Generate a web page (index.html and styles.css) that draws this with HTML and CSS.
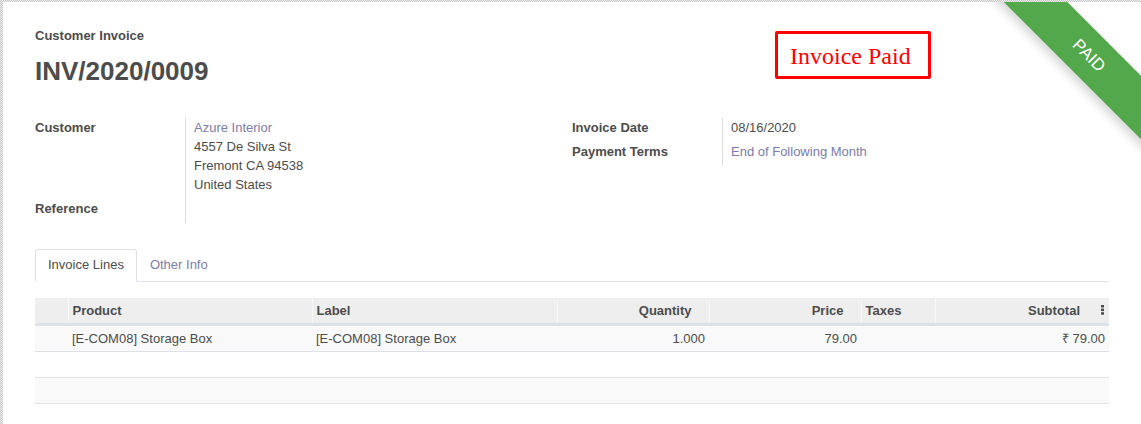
FILE: index.html
```html
<!DOCTYPE html>
<html lang="en">
<head>
<meta charset="utf-8">
<title>INV/2020/0009</title>
<link rel="stylesheet" href="styles.css">
</head>
<body>
<div class="sheet">
  <div class="ribbon-wrap"><span class="ribbon">PAID</span></div>

  <div class="header">
    <div class="title-block">
      <div class="subtitle">Customer Invoice</div>
      <h1 class="title">INV/2020/0009</h1>
    </div>
    <div class="stamp-col">
      <div class="stamp">Invoice Paid</div>
    </div>
  </div>

  <div class="groups">
    <div class="group">
      <div class="row">
        <div class="label">Customer</div>
        <div class="value">
          <a class="link">Azure Interior</a>
          <div>4557 De Silva St</div>
          <div>Fremont CA 94538</div>
          <div>United States</div>
        </div>
      </div>
      <div class="row">
        <div class="label">Reference</div>
        <div class="value"></div>
      </div>
    </div>
    <div class="group">
      <div class="row">
        <div class="label">Invoice Date</div>
        <div class="value">08/16/2020</div>
      </div>
      <div class="row">
        <div class="label">Payment Terms</div>
        <div class="value"><a class="link">End of Following Month</a></div>
      </div>
    </div>
  </div>

  <ul class="tabs">
    <li class="tab active">Invoice Lines</li>
    <li class="tab">Other Info</li>
  </ul>

  <table class="lines">
    <colgroup>
      <col class="c-handle">
      <col class="c-product">
      <col class="c-label">
      <col class="c-qty">
      <col class="c-price">
      <col class="c-taxes">
      <col class="c-subtotal">
    </colgroup>
    <thead>
      <tr>
        <th class="handle"></th>
        <th>Product</th>
        <th>Label</th>
        <th class="num">Quantity</th>
        <th class="num">Price</th>
        <th>Taxes</th>
        <th class="last">
          <div class="last-inner">
            <span>Subtotal</span>
            <svg class="toggler" width="3" height="10" viewBox="0 0 3 10"><rect x="0" y="0" width="3" height="2.5"/><rect x="0" y="3.6" width="3" height="2.5"/><rect x="0" y="7.2" width="3" height="2.5"/></svg>
          </div>
        </th>
      </tr>
    </thead>
    <tbody>
      <tr class="stripe">
        <td></td>
        <td>[E-COM08] Storage Box</td>
        <td>[E-COM08] Storage Box</td>
        <td class="num">1.000</td>
        <td class="num">79.00</td>
        <td></td>
        <td class="num">₹ 79.00</td>
      </tr>
      <tr>
        <td></td><td></td><td></td><td></td><td></td><td></td><td></td>
      </tr>
      <tr class="stripe">
        <td></td><td></td><td></td><td></td><td></td><td></td><td></td>
      </tr>
    </tbody>
  </table>
</div>
</body>
</html>
```

FILE: styles.css
```css
html, body {
  margin: 0;
  padding: 0;
}

body {
  background: repeating-conic-gradient(#c8c8c8 0 25%, #ececec 0 50%) 0 0 / 2px 2px;
  font-family: "Liberation Sans", Arial, sans-serif;
  font-size: 13px;
  color: #4c4c4c;
  height: 424px;
  overflow: hidden;
}

.sheet {
  position: relative;
  margin: 2px 0 0 3px;
  height: 422px;
  background: #fff;
  overflow: hidden;
  padding: 0 32px;
  box-sizing: border-box;
}

/* Ribbon */
.ribbon-wrap {
  position: absolute;
  top: 0;
  right: 0;
  width: 150px;
  height: 150px;
  overflow: hidden;
}

.ribbon {
  position: absolute;
  left: -14px;
  top: 31px;
  width: 224px;
  height: 45px;
  line-height: 45px;
  text-align: center;
  background: #52a84b;
  color: #fff;
  font-size: 17px;
  transform: rotate(45deg);
  box-shadow: 0 6px 9px rgba(0, 0, 0, 0.14);
}

/* Header */
.header {
  display: grid;
  grid-template-columns: 1fr 1fr;
  padding-top: 25px;
}

.subtitle {
  font-weight: bold;
  line-height: 18px;
}

.title {
  margin: 11px 0 0;
  font-size: 26px;
  line-height: 31px;
  font-weight: bold;
}

.stamp-col {
  padding-top: 4px;
}

.stamp {
  margin-left: 203px;
  width: 138px;
  height: 42px;
  border: 3px solid #ff0000;
  border-radius: 2px;
  color: #ff0000;
  font-family: "Liberation Serif", "Times New Roman", serif;
  font-size: 24px;
  line-height: 44px;
  padding-left: 12px;
  box-sizing: content-box;
}

/* Groups */
.groups {
  display: grid;
  grid-template-columns: 1fr 1fr;
  margin-top: 31px;
}

.row {
  display: grid;
  grid-template-columns: 151px 1fr;
  line-height: 19px;
}

.label {
  font-weight: bold;
  border-right: 1px solid #dddddd;
  padding-bottom: 5px;
}

.value {
  padding-left: 8px;
  padding-bottom: 5px;
}

.link {
  color: #7c7bad;
  display: block;
}

/* Tabs */
.tabs {
  list-style: none;
  margin: 26px 0 0;
  padding: 0;
  display: flex;
  border-bottom: 1px solid #dee2e6;
}

.tab {
  padding: 6px 12px 7px;
  line-height: 18px;
  border: 1px solid transparent;
  border-top-left-radius: 3px;
  border-top-right-radius: 3px;
  margin-bottom: -1px;
  color: #7c7bad;
}

.tab.active {
  color: #4c4c4c;
  background: #fff;
  border-color: #dee2e6 #dee2e6 #fff;
}

/* Table */
.lines {
  margin-top: 16px;
  width: 100%;
  border-collapse: collapse;
  table-layout: fixed;
}

.c-handle { width: 33px; }
.c-product { width: 244px; }
.c-label { width: 245px; }
.c-qty { width: 152px; }
.c-price { width: 152px; }
.c-taxes { width: 74px; }
.c-subtotal { width: 174px; }

.lines th {
  background: #eeeeee;
  height: 26px;
  padding: 0 4px;
  text-align: left;
  font-weight: bold;
  border-left: 1px solid #f8f8f8;
  border-bottom: 3px solid #dee2e6;
  box-sizing: border-box;
  white-space: nowrap;
}

.lines th.handle {
  border-left: none;
}

.lines th.num {
  text-align: right;
  padding-right: 17px;
}

.lines th.last {
  padding-right: 4px;
}

.last-inner {
  display: flex;
  justify-content: flex-end;
  align-items: center;
  gap: 21px;
}

.toggler {
  fill: #4c4c4c;
  margin-right: 1px;
}

.lines td {
  height: 25px;
  padding: 0 4px;
  border-bottom: 1px solid #dee2e6;
  white-space: nowrap;
}

.lines td.num {
  text-align: right;
}

.lines tr.stripe td {
  background: #f9f9f9;
}
```
